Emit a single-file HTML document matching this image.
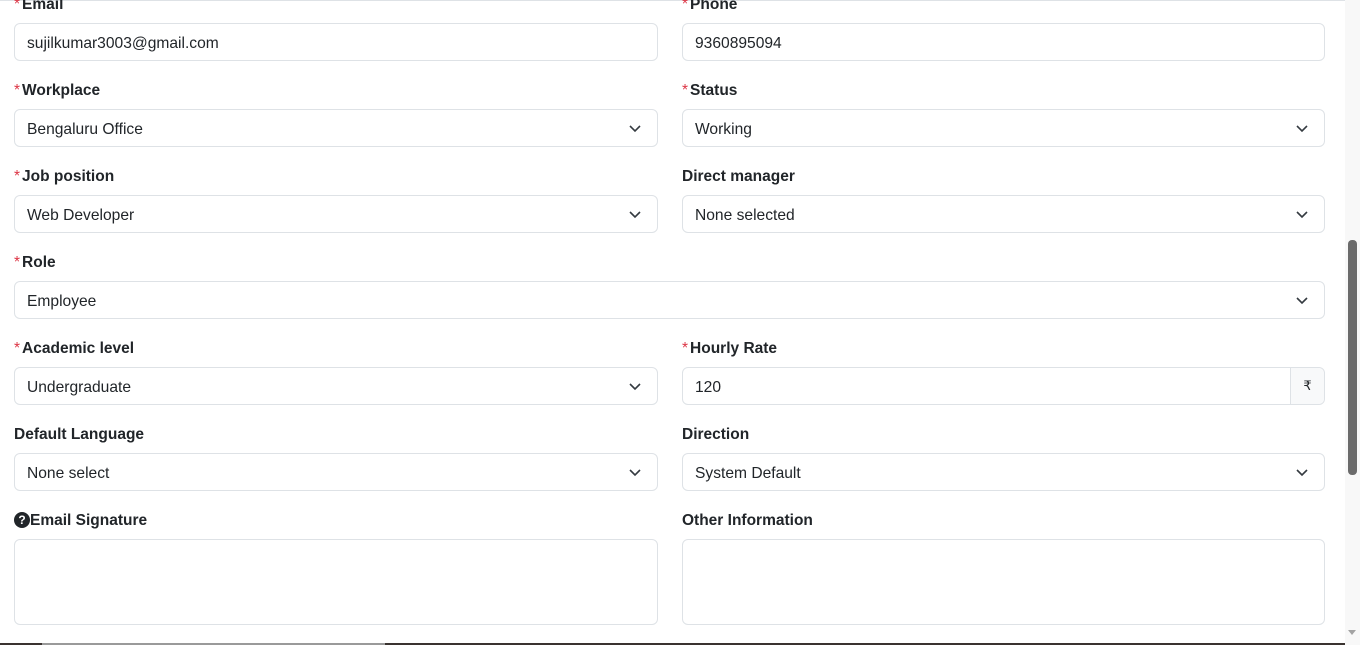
<!DOCTYPE html>
<html><head><meta charset="utf-8"><style>
*{box-sizing:border-box}
body{margin:0;width:1360px;height:645px;overflow:hidden;background:#fff;font-family:"Liberation Sans",sans-serif;color:#212529;position:relative}
.f{position:absolute;height:38px;border:1px solid #dee2e6;border-radius:6px;padding:2px 12px 0;line-height:36px;font-size:15.6px;background:#fff}
.l{position:absolute;font-size:15.5px;font-weight:bold;color:#212529}
.l b{color:#dc3545;font-weight:normal;margin-right:2px}
.c{position:absolute;right:16px;top:12px}
.ta{position:absolute;height:86px;border:1px solid #dee2e6;border-radius:6px}
.L{left:14px;width:644px}.R{left:682px;width:643px}
</style></head><body>
<div style="position:absolute;left:0;top:0;width:1345px;height:1px;background:#dee2e6"></div>
<div class="l" style="left:14px;top:-4px"><b>*</b>Email</div>
<div class="l" style="left:682px;top:-4px"><b>*</b>Phone</div>
<div class="f L" style="top:23px">sujilkumar3003@gmail.com</div>
<div class="f R" style="top:23px">9360895094</div>

<div class="l" style="left:14px;top:82px"><b>*</b>Workplace</div>
<div class="l" style="left:682px;top:82px"><b>*</b>Status</div>
<div class="f L" style="top:109px">Bengaluru Office<svg class="c" width="12" height="12" viewBox="0 0 12 12"><path d="M1 4l5 5 5-5" fill="none" stroke="#343a40" stroke-width="1.6"/></svg></div>
<div class="f R" style="top:109px">Working<svg class="c" width="12" height="12" viewBox="0 0 12 12"><path d="M1 4l5 5 5-5" fill="none" stroke="#343a40" stroke-width="1.6"/></svg></div>

<div class="l" style="left:14px;top:168px"><b>*</b>Job position</div>
<div class="l" style="left:682px;top:168px">Direct manager</div>
<div class="f L" style="top:195px">Web Developer<svg class="c" width="12" height="12" viewBox="0 0 12 12"><path d="M1 4l5 5 5-5" fill="none" stroke="#343a40" stroke-width="1.6"/></svg></div>
<div class="f R" style="top:195px">None selected<svg class="c" width="12" height="12" viewBox="0 0 12 12"><path d="M1 4l5 5 5-5" fill="none" stroke="#343a40" stroke-width="1.6"/></svg></div>

<div class="l" style="left:14px;top:254px"><b>*</b>Role</div>
<div class="f" style="left:14px;width:1311px;top:281px">Employee<svg class="c" width="12" height="12" viewBox="0 0 12 12"><path d="M1 4l5 5 5-5" fill="none" stroke="#343a40" stroke-width="1.6"/></svg></div>

<div class="l" style="left:14px;top:340px"><b>*</b>Academic level</div>
<div class="l" style="left:682px;top:340px"><b>*</b>Hourly Rate</div>
<div class="f L" style="top:367px">Undergraduate<svg class="c" width="12" height="12" viewBox="0 0 12 12"><path d="M1 4l5 5 5-5" fill="none" stroke="#343a40" stroke-width="1.6"/></svg></div>
<div class="f R" style="top:367px">120<div style="position:absolute;right:0;top:0;width:34px;height:36px;background:#f8f9fa;border-left:1px solid #dee2e6;border-radius:0 6px 6px 0;text-align:center;font-size:13px;line-height:36px">₹</div></div>

<div class="l" style="left:14px;top:426px">Default Language</div>
<div class="l" style="left:682px;top:426px">Direction</div>
<div class="f L" style="top:453px">None select<svg class="c" width="12" height="12" viewBox="0 0 12 12"><path d="M1 4l5 5 5-5" fill="none" stroke="#343a40" stroke-width="1.6"/></svg></div>
<div class="f R" style="top:453px">System Default<svg class="c" width="12" height="12" viewBox="0 0 12 12"><path d="M1 4l5 5 5-5" fill="none" stroke="#343a40" stroke-width="1.6"/></svg></div>

<div class="l" style="left:14px;top:512px"><span style="display:inline-block;width:16px;height:16px;border-radius:50%;background:#212529;color:#fff;font-size:12px;text-align:center;line-height:16px;vertical-align:1px">?</span>Email Signature</div>
<div class="l" style="left:682px;top:512px">Other Information</div>
<div class="ta L" style="top:539px"></div>
<div class="ta R" style="top:539px"></div>

<div style="position:absolute;left:1345px;top:0;width:15px;height:645px;background:#f8f8f8"></div>
<div style="position:absolute;left:1348px;top:240px;width:9px;height:235px;background:#6b6b6b;border-radius:4px"></div>
<div style="position:absolute;left:1348px;top:630px;width:0;height:0;border-left:4px solid transparent;border-right:4px solid transparent;border-top:5px solid #a3a3a3"></div>
<div style="position:absolute;left:0;top:643px;width:1345px;height:2px;background:#3a3330"></div>
<div style="position:absolute;left:42px;top:643px;width:343px;height:2px;background:#9a9a9a"></div>
</body></html>
